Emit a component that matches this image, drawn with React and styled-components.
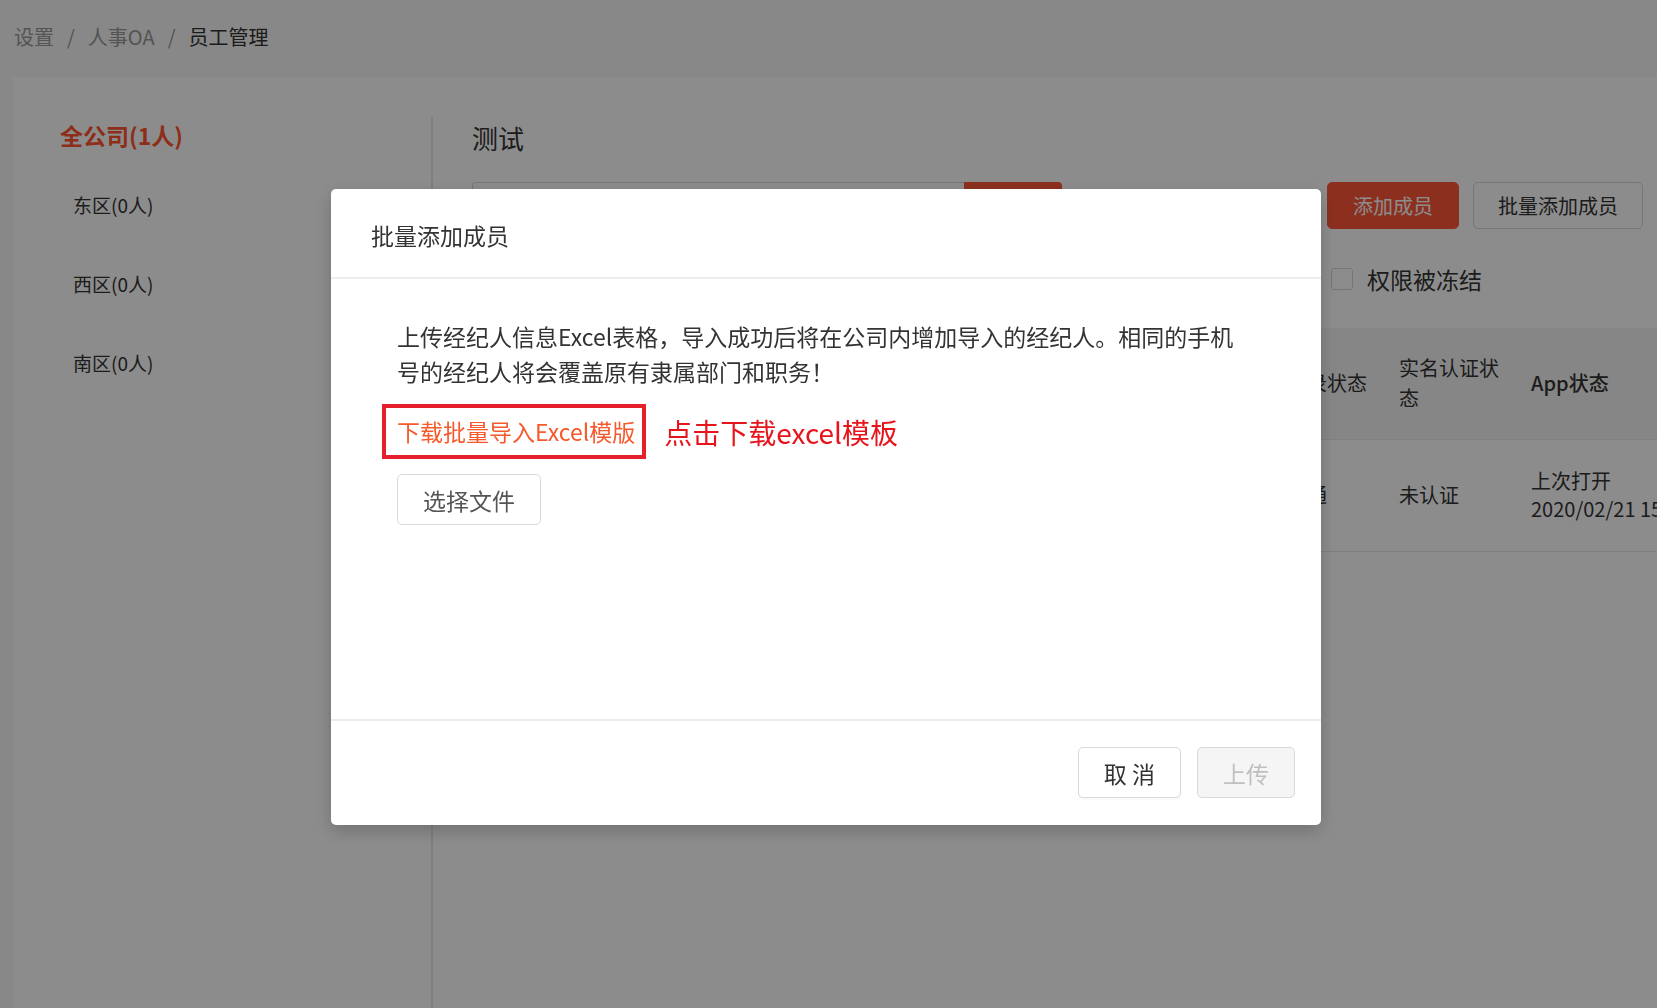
import React from "react";
import styled, { createGlobalStyle } from "styled-components";

const GlobalStyle = createGlobalStyle`
  * {
    box-sizing: border-box;
  }
  html,
  body {
    margin: 0;
    padding: 0;
  }
  body {
    font-family: "Noto Sans CJK SC", "Noto Sans", sans-serif;
    color: #333;
    background: #f8f8f8;
    overflow: hidden;
  }
`;

const Page = styled.div`
  min-height: 100vh;
  display: flex;
  flex-direction: column;
  background: #f8f8f8;
`;

const Breadcrumb = styled.nav`
  height: 77px;
  padding: 23px 0 0 14px;
  font-size: 20px;
  line-height: 28px;
  display: flex;
  align-items: flex-start;
`;

const Crumb = styled.span`
  color: ${(props) => (props.$current ? "#333" : "#999")};
`;

const Separator = styled.span`
  color: #999;
  margin: 0 13px;
`;

const Panel = styled.div`
  flex: 1;
  margin-left: 13px;
  background: #fff;
  display: flex;
`;

const Sidebar = styled.aside`
  width: 418px;
  flex-shrink: 0;
  padding: 43px 0 0 47px;
`;

const CompanyTitle = styled.div`
  font-size: 23px;
  line-height: 30px;
  font-weight: bold;
  color: #ff5530;
  margin-bottom: 40px;
`;

const DeptItem = styled.div`
  font-size: 19px;
  line-height: 30px;
  color: #333;
  padding-left: 13px;
  margin-bottom: 49px;
`;

const Main = styled.section`
  flex: 1;
  min-width: 0;
  margin-top: 40px;
  border-left: 2px solid #e6e6e6;
  padding: 3px 14px 0 39px;
`;

const MainTitle = styled.h2`
  margin: 0;
  font-size: 26px;
  line-height: 36px;
  font-weight: normal;
  color: #333;
`;

const Toolbar = styled.div`
  margin-top: 26px;
  display: flex;
  justify-content: space-between;
  align-items: center;
`;

const SearchGroup = styled.div`
  display: flex;
  height: 47px;
`;

const SearchInput = styled.input`
  width: 492px;
  height: 100%;
  border: 1px solid #d9d9d9;
  border-right: none;
  border-radius: 4px 0 0 4px;
  padding: 0 14px;
  font: inherit;
  font-size: 20px;
  outline: none;
`;

const SearchButton = styled.button`
  width: 98px;
  height: 100%;
  border: none;
  border-radius: 0 4px 4px 0;
  background: #ff573a;
  color: #fff;
  font: inherit;
  font-size: 20px;
`;

const Actions = styled.div`
  display: flex;
  gap: 14px;
`;

const ToolButton = styled.button`
  height: 47px;
  padding: 0 ${(props) => (props.$primary ? "25px" : "24px")};
  border-radius: 5px;
  font-family: inherit;
  font-size: 20px;
  line-height: 28px;
  border: 1px solid ${(props) => (props.$primary ? "#ff573a" : "#d9d9d9")};
  background: ${(props) => (props.$primary ? "#ff573a" : "#fff")};
  color: ${(props) => (props.$primary ? "#fff" : "#333")};
  cursor: pointer;
`;

const FilterRow = styled.div`
  margin-top: 27px;
  height: 46px;
  display: flex;
  align-items: center;
  gap: 20px;
`;

const FakeSelect = styled.div`
  width: 400px;
  height: 46px;
  border: 1px solid #d9d9d9;
  border-radius: 4px;
  padding: 0 14px;
  display: flex;
  align-items: center;
  font-size: 20px;
  color: #bfbfbf;
`;

const CheckLabel = styled.label`
  margin-left: 19px;
  display: flex;
  align-items: center;
  gap: 14px;
  font-size: 23px;
  line-height: 32px;
  color: #333;
`;

const CheckBox = styled.span`
  width: 22px;
  height: 22px;
  border: 1px solid #d9d9d9;
  border-radius: 3px;
  background: #fff;
`;

const TableWrap = styled.div`
  margin-top: 26px;
  margin-right: -14px;
  overflow: hidden;
`;

const Table = styled.table`
  width: 1283px;
  table-layout: fixed;
  border-collapse: collapse;
  font-size: 20px;
  color: #333;

  th {
    height: 111px;
    padding: 0 16px;
    background: #f5f5f5;
    text-align: left;
    font-weight: normal;
    line-height: 30px;
    border-bottom: 1px solid #e8e8e8;
    vertical-align: middle;
  }
  td {
    height: 112px;
    padding: 0 16px;
    line-height: 28px;
    border-bottom: 1px solid #e8e8e8;
    vertical-align: middle;
  }
`;

const BoldHead = styled.th`
  && {
    font-weight: 500;
  }
`;

const Overlay = styled.div`
  position: fixed;
  inset: 0;
  background: rgba(0, 0, 0, 0.45);
  display: flex;
  justify-content: center;
  align-items: flex-start;
  padding: 189px 5px 0 0;
`;

const Dialog = styled.div`
  width: 990px;
  background: #fff;
  border-radius: 5px;
  box-shadow: 0 6px 18px rgba(0, 0, 0, 0.2);
  overflow: hidden;
`;

const DialogHeader = styled.div`
  height: 90px;
  padding: 3px 40px 0;
  display: flex;
  align-items: center;
  border-bottom: 2px solid #ededed;
  font-size: 23px;
  line-height: 32px;
  color: #333;
`;

const DialogBody = styled.div`
  height: 440px;
  padding: 40px 66px 0;
  display: flex;
  flex-direction: column;
  align-items: flex-start;
`;

const Intro = styled.p`
  margin: 0;
  font-size: 23px;
  line-height: 35px;
  color: #333;
`;

const LinkRow = styled.div`
  margin-top: 15px;
  margin-left: -15px;
  display: flex;
  align-items: center;
  gap: 18px;
`;

const Annotated = styled.div`
  border: 4px solid #e5202a;
  padding: 8px 7px 8px 11px;
`;

const DownloadLink = styled.a`
  display: block;
  font-size: 23px;
  line-height: 31px;
  color: #f65a2c;
  text-decoration: none;
  cursor: pointer;
`;

const Note = styled.span`
  font-size: 28px;
  line-height: 40px;
  color: #e8141c;
`;

const FileButton = styled.button`
  margin-top: 15px;
  height: 51px;
  padding: 0 25px;
  border: 1px solid #d9d9d9;
  border-radius: 5px;
  background: #fff;
  font-family: inherit;
  font-size: 23px;
  color: #555;
`;

const DialogFooter = styled.div`
  border-top: 2px solid #ededed;
  padding: 26px 26px 27px;
  display: flex;
  justify-content: flex-end;
  gap: 16px;
`;

const FooterButton = styled.button`
  height: 51px;
  padding: 0 25px;
  border: 1px solid #d9d9d9;
  border-radius: 5px;
  font-family: inherit;
  font-size: 23px;
  background: ${(props) => (props.disabled ? "#f5f5f5" : "#fff")};
  color: ${(props) => (props.disabled ? "#bfbfbf" : "#333")};
  box-shadow: ${(props) =>
    props.disabled ? "none" : "0 2px 0 rgba(0, 0, 0, 0.02)"};
`;

const depts = ["东区(0人)", "西区(0人)", "南区(0人)"];

const App = () => {
  return (
    <>
      <GlobalStyle />
      <Page>
        <Breadcrumb>
          <Crumb>设置</Crumb>
          <Separator>/</Separator>
          <Crumb>人事OA</Crumb>
          <Separator>/</Separator>
          <Crumb $current>员工管理</Crumb>
        </Breadcrumb>
        <Panel>
          <Sidebar>
            <CompanyTitle>全公司(1人)</CompanyTitle>
            {depts.map((d) => (
              <DeptItem key={d}>{d}</DeptItem>
            ))}
          </Sidebar>
          <Main>
            <MainTitle>测试</MainTitle>
            <Toolbar>
              <SearchGroup>
                <SearchInput placeholder="请输入姓名或手机号" />
                <SearchButton>搜索</SearchButton>
              </SearchGroup>
              <Actions>
                <ToolButton $primary>添加成员</ToolButton>
                <ToolButton>批量添加成员</ToolButton>
              </Actions>
            </Toolbar>
            <FilterRow>
              <FakeSelect>全部部门</FakeSelect>
              <FakeSelect>全部职务</FakeSelect>
              <CheckLabel>
                <CheckBox />
                权限被冻结
              </CheckLabel>
            </FilterRow>
            <TableWrap>
              <Table>
                <colgroup>
                  <col style={{ width: 200 }} />
                  <col style={{ width: 220 }} />
                  <col style={{ width: 190 }} />
                  <col style={{ width: 189 }} />
                  <col style={{ width: 112 }} />
                  <col style={{ width: 132 }} />
                  <col style={{ width: 240 }} />
                </colgroup>
                <thead>
                  <tr>
                    <th>姓名</th>
                    <th>手机号</th>
                    <th>部门</th>
                    <th>职务</th>
                    <th>登录状态</th>
                    <th>实名认证状态</th>
                    <BoldHead>App状态</BoldHead>
                  </tr>
                </thead>
                <tbody>
                  <tr>
                    <td>测试员</td>
                    <td>13800000000</td>
                    <td>测试</td>
                    <td>经纪人</td>
                    <td>普通</td>
                    <td>未认证</td>
                    <td>
                      上次打开
                      <br />
                      2020/02/21 15:32
                    </td>
                  </tr>
                </tbody>
              </Table>
            </TableWrap>
          </Main>
        </Panel>
      </Page>

      <Overlay>
        <Dialog>
          <DialogHeader>批量添加成员</DialogHeader>
          <DialogBody>
            <Intro>
              上传经纪人信息Excel表格，导入成功后将在公司内增加导入的经纪人。相同的手机号的经纪人将会覆盖原有隶属部门和职务！
            </Intro>
            <LinkRow>
              <Annotated>
                <DownloadLink>下载批量导入Excel模版</DownloadLink>
              </Annotated>
              <Note>点击下载excel模板</Note>
            </LinkRow>
            <FileButton>选择文件</FileButton>
          </DialogBody>
          <DialogFooter>
            <FooterButton>取 消</FooterButton>
            <FooterButton disabled>上传</FooterButton>
          </DialogFooter>
        </Dialog>
      </Overlay>
    </>
  );
};

export default App;
